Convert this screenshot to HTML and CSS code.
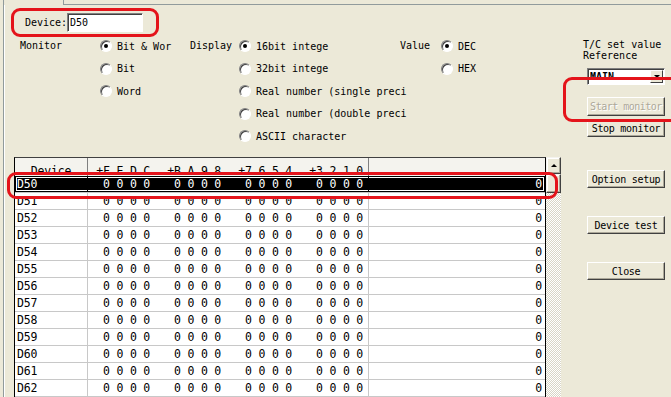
FILE: index.html
```html
<!DOCTYPE html>
<html lang="en">
<head>
    <meta charset="UTF-8">
    <title>Device Monitor</title>
    <link rel="stylesheet" href="styles.css">
</head>
<body>
    <div class="window">
        <div class="tabbar"><div class="tab"></div><div class="tab-rest"></div></div>
        <div class="frame">
            <div class="left">
                <div class="device-row">
                    <label for="device">Device:</label>
                    <input type="text" id="device" value="D50">
                </div>
                <div class="options">
                    <span class="opt-label monitor">Monitor</span>
                    <div class="radios monitor-radios">
                        <div class="radio-item"><span class="radio checked"></span>Bit &amp; Wor</div>
                        <div class="radio-item"><span class="radio"></span>Bit</div>
                        <div class="radio-item"><span class="radio"></span>Word</div>
                    </div>
                    <span class="opt-label display">Display</span>
                    <div class="radios display-radios">
                        <div class="radio-item"><span class="radio checked"></span>16bit intege</div>
                        <div class="radio-item"><span class="radio"></span>32bit intege</div>
                        <div class="radio-item"><span class="radio"></span>Real number (single preci</div>
                        <div class="radio-item"><span class="radio"></span>Real number (double preci</div>
                        <div class="radio-item"><span class="radio"></span>ASCII character</div>
                    </div>
                    <span class="opt-label value">Value</span>
                    <div class="radios">
                        <div class="radio-item"><span class="radio checked"></span>DEC</div>
                        <div class="radio-item"><span class="radio"></span>HEX</div>
                    </div>
                </div>
                <div class="listbox">
                    <div class="list">
                        <div class="row head">
                            <div class="cell dev">Device</div>
                            <div class="cell bits"><span>+F E D C</span><span>+B A 9 8</span><span>+7 6 5 4</span><span>+3 2 1 0</span></div>
                            <div class="cell val"></div>
                        </div>
                        <div id="rows"></div>
                    </div>
                    <div class="scrollbar">
                        <div class="sb-btn up"><span class="arrow-up"></span></div>
                        <div class="sb-btn thumb"></div>
                        <div class="sb-track"></div>
                    </div>
                </div>
            </div>
            <div class="side">
                <div class="side-label">T/C set value<br>Reference</div>
                <div class="select"><span>MAIN</span><span class="drop"><span class="arrow-down"></span></span></div>
                <button class="btn start" disabled>Start monitor</button>
                <button class="btn stop">Stop monitor</button>
                <button class="btn option">Option setup</button>
                <button class="btn gap">Device test</button>
                <button class="btn gap">Close</button>
            </div>
        </div>
        <div class="mark mark-device"></div>
        <div class="mark mark-start"></div>
        <div class="mark mark-row"></div>
    </div>
    <script>
        const rows = document.getElementById('rows');
        for (let i = 50; i <= 62; i++) {
            const row = document.createElement('div');
            row.className = 'row' + (i === 50 ? ' selected' : '') + (i === 51 ? ' cut' : '');
            row.innerHTML = `
                <div class="cell dev"><span>D${i}</span></div>
                <div class="cell bits">${'<span>0 0 0 0</span>'.repeat(4)}</div>
                <div class="cell val"><span>0</span></div>
            `;
            rows.appendChild(row);
        }
    </script>
</body>
</html>
```

FILE: styles.css
```css
body {
    margin: 0;
    background-color: #ece9d8;
    font-family: "DejaVu Sans Mono", monospace;
    font-size: 10px;
    color: #000;
    overflow: hidden;
}
.window {
    position: relative;
    width: 671px;
    height: 397px;
    overflow: hidden;
}
.tabbar {
    display: flex;
    height: 5px;
    margin-left: 3px;
}
.tab {
    width: 59px;
    border-left: 1px solid #919b9c;
    border-right: 1px solid #919b9c;
}
.tab-rest {
    flex: 1;
    border-bottom: 1px solid #919b9c;
}
.frame {
    display: flex;
    margin-left: 3px;
    height: 392px;
    border-left: 1px solid #919b9c;
    box-shadow: inset 1px 0 #fff;
}
.left {
    width: 557px;
    flex: none;
}
.device-row {
    display: flex;
    align-items: center;
    margin: 8px 0 0 21px;
    height: 19px;
}
.device-row label {
    width: 42px;
}
.device-row input {
    box-sizing: border-box;
    width: 76px;
    height: 19px;
    margin: 0;
    padding: 0 2px;
    font: inherit;
    border: 1px solid;
    border-color: #808080 #fff #fff #808080;
    box-shadow: inset 1px 1px #404040;
    background: #fff;
    outline: none;
}
.options {
    display: flex;
    margin-top: 2.75px;
    padding-left: 16px;
    height: 112.5px;
}
.opt-label {
    line-height: 22.5px;
    flex: none;
}
.opt-label.monitor { width: 80px; }
.opt-label.display { width: 49px; }
.opt-label.value { width: 41px; }
.radios {
    flex: none;
}
.monitor-radios { width: 90px; }
.display-radios { width: 161px; }
.radio-item {
    display: flex;
    align-items: center;
    height: 22.5px;
    white-space: nowrap;
}
.radio {
    position: relative;
    box-sizing: border-box;
    width: 12px;
    height: 12px;
    margin-right: 5px;
    border-radius: 50%;
    border: 1px solid;
    border-color: #808080 #fff #fff #808080;
    box-shadow: inset 1px 1px #404040;
    background: #fff;
    flex: none;
}
.radio.checked::after {
    content: "";
    position: absolute;
    left: 3px;
    top: 3px;
    width: 4px;
    height: 4px;
    border-radius: 50%;
    background: #000;
}
.listbox {
    display: flex;
    margin: 9.75px 0 0 10px;
    height: 240px;
}
.list {
    width: 530px;
    border-left: 1px solid #000;
    border-right: 1px solid #000;
    border-top: 1px solid #404040;
    background: #fff;
    font-size: 11.5px;
    letter-spacing: -0.2px;
    overflow: hidden;
}
.row {
    display: grid;
    grid-template-columns: 73px 281px 176px;
    height: 17px;
    box-sizing: border-box;
    border-bottom: 1px solid #c8c8c8;
    line-height: 16px;
    white-space: pre;
}
.cell {
    box-sizing: border-box;
    border-right: 1px solid #c8c8c8;
    overflow: hidden;
}
.cell.val {
    border-right: none;
    text-align: right;
    padding-right: 3px;
}
.cell.dev {
    padding-left: 2px;
}
.bits {
    display: flex;
    padding-left: 15px;
}
.bits span {
    width: 71px;
    flex: none;
}
.row.head {
    height: 18px;
    border-bottom: none;
    background: #f4f3ee;
    line-height: 14px;
}
.head .cell {
    padding-top: 6px;
    border-right-color: #808080;
}
.head .cell.dev {
    text-align: center;
    padding-left: 0;
}
.head .bits {
    padding-left: 8.3px;
}
.row.selected {
    background: #000;
    color: #fff;
    box-shadow: inset 0 0 0 1px #000, inset 0 0 0 2px #fff;
}
.row.selected .cell {
    border-right-color: #000;
}
.row.cut span {
    clip-path: inset(5px 0 0 0);
}
.scrollbar {
    display: flex;
    flex-direction: column;
    width: 15px;
}
.sb-btn {
    box-sizing: border-box;
    background: #ece9d8;
    border: 1px solid;
    border-color: #f4f3ee #404040 #404040 #f4f3ee;
    box-shadow: inset -1px -1px #aca899, inset 1px 1px #fff;
}
.sb-btn.up {
    height: 17px;
    display: flex;
    align-items: center;
    justify-content: center;
}
.sb-btn.thumb {
    height: 19px;
}
.sb-track {
    flex: 1;
    background: repeating-conic-gradient(#fff 0 25%, #d8d5c6 0 50%) 0 0 / 2px 2px;
}
.arrow-up {
    width: 0;
    height: 0;
    border-left: 3px solid transparent;
    border-right: 3px solid transparent;
    border-bottom: 3px solid #000;
}
.side {
    padding: 34px 0 0 22px;
    display: flex;
    flex-direction: column;
    align-items: flex-start;
}
.side-label {
    line-height: 11px;
}
.select {
    box-sizing: border-box;
    display: flex;
    align-items: center;
    justify-content: space-between;
    width: 78px;
    height: 17px;
    margin: 7px 0 0 4px;
    padding-left: 2px;
    background: #fff;
    border: 1px solid;
    border-color: #808080 #fff #fff #808080;
    box-shadow: inset 1px 1px #404040;
    font-weight: bold;
}
.drop {
    box-sizing: border-box;
    display: flex;
    align-items: center;
    justify-content: center;
    width: 13px;
    height: 13px;
    margin-right: 1px;
    background: #ece9d8;
    border: 1px solid;
    border-color: #fff #404040 #404040 #fff;
}
.arrow-down {
    width: 0;
    height: 0;
    border-left: 3px solid transparent;
    border-right: 3px solid transparent;
    border-top: 3px solid #000;
}
.btn {
    box-sizing: border-box;
    width: 78px;
    height: 18px;
    margin: 0 0 0 4px;
    padding: 0;
    font: inherit;
    letter-spacing: -0.3px;
    color: #000;
    background: #ece9d8;
    border: 1px solid;
    border-color: #fff #404040 #404040 #fff;
    box-shadow: inset -1px -1px #aca899;
    white-space: nowrap;
    overflow: hidden;
}
.btn.start {
    height: 19px;
    margin-top: 12px;
    letter-spacing: -0.5px;
    color: #aca899;
    text-shadow: 1px 1px #fff;
}
.btn.stop { margin-top: 3px; }
.btn.option { margin-top: 33px; }
.btn.gap { margin-top: 28px; }
.mark {
    position: absolute;
    box-sizing: border-box;
    border: 3px solid #e4141b;
    border-radius: 9px;
}
.mark-device {
    left: 11px;
    top: 8px;
    width: 148px;
    height: 29px;
}
.mark-start {
    left: 563px;
    top: 77px;
    width: 140px;
    height: 45px;
}
.mark-row {
    left: 7px;
    top: 172px;
    width: 551px;
    height: 27px;
}
```
